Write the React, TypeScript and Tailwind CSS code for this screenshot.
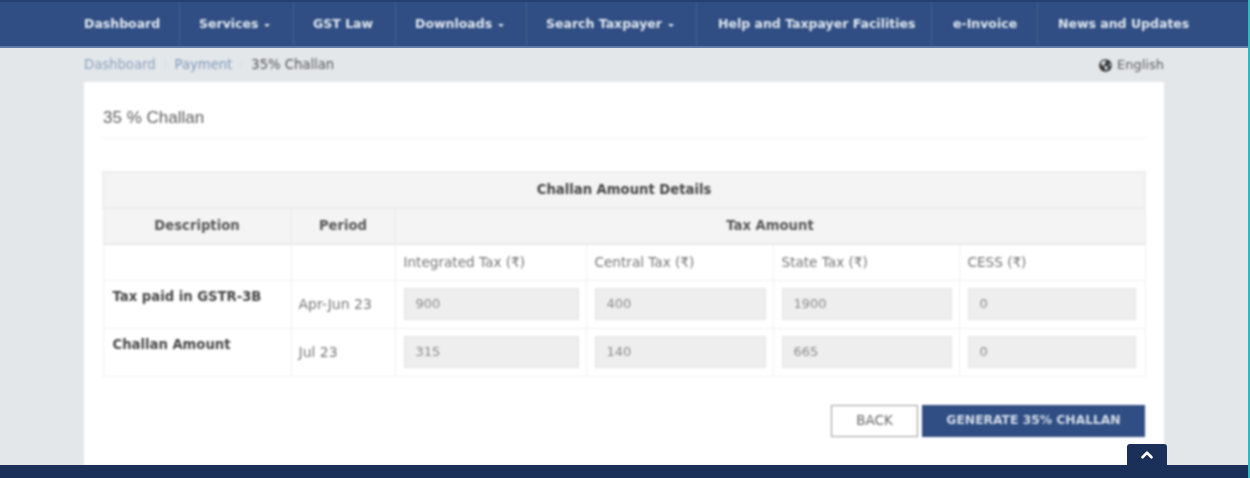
import { ChevronUp } from 'lucide-react';
import { FaGlobeAmericas } from 'react-icons/fa';

const navItems = [
  { label: 'Dashboard', cls: 'w-[96px]', caret: false },
  { label: 'Services', cls: 'w-[114px] pl-[19px]', caret: true },
  { label: 'GST Law', cls: 'w-[102px] pl-[19px]', caret: false },
  { label: 'Downloads', cls: 'w-[131px] pl-[19px]', caret: true },
  { label: 'Search Taxpayer', cls: 'w-[170px] pl-[19px]', caret: true },
  { label: 'Help and Taxpayer Facilities', cls: 'w-[235px] pl-[21px] text-[12.3px]', caret: false },
  { label: 'e-Invoice', cls: 'w-[106px] pl-[21px]', caret: false },
  { label: 'News and Updates', cls: 'w-[190px] pl-[20px]', caret: false },
];

const rows = [
  { name: 'Tax paid in GSTR-3B', period: 'Apr-Jun 23', values: ['900', '400', '1900', '0'] },
  { name: 'Challan Amount', period: 'Jul 23', values: ['315', '140', '665', '0'] },
];

const taxHeads = ['Integrated Tax (₹)', 'Central Tax (₹)', 'State Tax (₹)', 'CESS (₹)'];

export default function App() {
  return (
    <div className="relative h-[478px] w-[1250px] overflow-hidden bg-[#e4e7ea] font-['DejaVu_Sans',sans-serif] text-[#4a4a4a]">
      {/* top nav */}
      <nav className="h-[48px] border-t-2 border-b-2 border-t-[#263f73] border-b-[#5f7ba6] bg-[#304e83] pl-[84px]">
        <ul className="flex h-full blur-[0.8px]">
          {navItems.map((item, i) => (
            <li
              key={item.label}
              className={`flex h-full items-center justify-start whitespace-nowrap text-[12.5px] font-semibold text-[#e3e9f2] ${item.cls} ${i < navItems.length - 1 ? 'border-r border-[#46628f]' : ''}`}
            >
              {item.label}
              {item.caret && (
                <span className="ml-[6px] mt-[3px] h-0 w-0 border-x-[3px] border-t-[3px] border-x-transparent border-t-[#e3e9f2]" />
              )}
            </li>
          ))}
        </ul>
      </nav>

      <main className="mx-[84px] w-[1080px] blur-[0.8px]">
        {/* breadcrumb */}
        <div className="flex h-[34px] items-center justify-between text-[13.2px]">
          <div className="flex items-center">
            <span className="text-[#8ca3c2]">Dashboard</span>
            <span className="mx-[9px] h-[8px] w-px bg-[#d5dbe2]" />
            <span className="text-[#7f99bd]">Payment</span>
            <span className="mx-[9px] h-[8px] w-px bg-[#d5dbe2]" />
            <span className="text-[#555]">35% Challan</span>
          </div>
          <div className="flex items-center gap-[5px] text-[#5a5a5a]">
            <FaGlobeAmericas size={13} className="text-[#333]" />
            <span className="text-[13px]">English</span>
          </div>
        </div>

        {/* card */}
        <section className="h-[383px] bg-white px-[18px]">
          <h1 className="flex h-[57px] items-center border-b border-[#f3f3f3] pt-[16px] pl-[1px] font-['Liberation_Sans',sans-serif] text-[17px] text-[#5c5c5c]">
            35 % Challan
          </h1>

          <table className="mt-[32px] w-[1042px] table-fixed border-collapse text-[13.2px]">
            <colgroup>
              <col className="w-[188px]" />
              <col className="w-[104px]" />
              <col className="w-[191px]" />
              <col className="w-[187px]" />
              <col className="w-[186px]" />
              <col className="w-[186px]" />
            </colgroup>
            <thead>
              <tr className="h-[36px] bg-[#f4f4f4]">
                <th colSpan={6} className="border-2 border-[#eeeeee] text-center font-bold text-[#444]">
                  Challan Amount Details
                </th>
              </tr>
              <tr className="h-[36px] bg-[#f4f4f4]">
                <th className="border border-b-2 border-[#eaeaea] text-center font-bold text-[#555]">Description</th>
                <th className="border border-b-2 border-[#eaeaea] text-center font-bold text-[#555]">Period</th>
                <th colSpan={4} className="border border-b-2 border-[#eaeaea] text-center font-bold text-[#555]">
                  Tax Amount
                </th>
              </tr>
              <tr className="h-[36px]">
                <th className="border border-[#f0f0f0]" />
                <th className="border border-[#f0f0f0]" />
                {taxHeads.map((h) => (
                  <th key={h} className="border border-[#f0f0f0] pl-[8px] text-left text-[13.6px] font-normal text-[#757575]">
                    {h}
                  </th>
                ))}
              </tr>
            </thead>
            <tbody>
              {rows.map((row) => (
                <tr key={row.name} className="h-[48px]">
                  <td className="border border-[#f0f0f0] pb-[15px] pl-[9px] font-bold text-[#444]">{row.name}</td>
                  <td className="border border-[#f0f0f0] pl-[7px] text-[14px] text-[#777]">{row.period}</td>
                  {row.values.map((v, i) => (
                    <td key={i} className={`border border-[#f0f0f0] pl-[8px] ${i === 3 ? 'pr-[9px]' : 'pr-[7px]'}`}>
                      <div className="flex h-[32px] items-center border border-[#e4e4e4] bg-[#eeeeee] pl-[11px] text-[13px] text-[#8a8a8a]">
                        {v}
                      </div>
                    </td>
                  ))}
                </tr>
              ))}
            </tbody>
          </table>

          <div className="mt-[28px] flex w-[1043px] justify-end gap-[4px]">
            <button className="h-[32px] w-[87px] border border-[#9a9a9a] bg-white text-[13.5px] text-[#666]">BACK</button>
            <button className="h-[32px] w-[223px] bg-[#304e83] text-[12.3px] font-semibold text-[#d5deeb]">GENERATE 35% CHALLAN</button>
          </div>
        </section>
      </main>

      {/* footer + scroll top */}
      <footer className="absolute inset-x-0 bottom-0 h-[13px] bg-[#1a3059]" />
      <div className="absolute left-[1127px] top-[444px] flex h-[22px] w-[40px] items-center justify-center rounded-t-[3px] bg-[#1a3059] text-white">
        <ChevronUp size={18} strokeWidth={3.5} />
      </div>
      <div className="absolute inset-y-0 right-0 w-[2px] bg-[#2fb8bd]" />
    </div>
  );
}
